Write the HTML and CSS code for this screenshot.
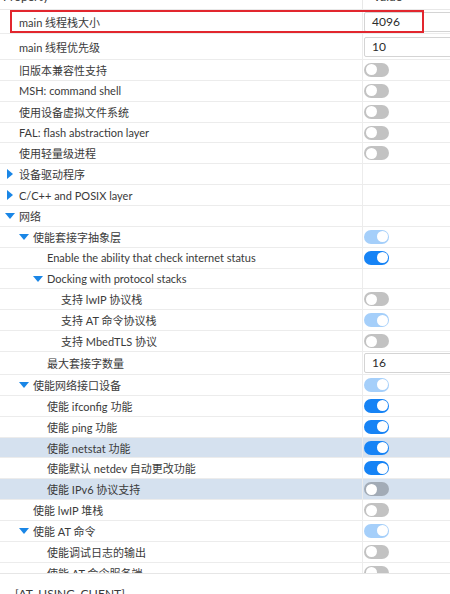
FILE: index.html
```html
<!DOCTYPE html>
<html>
<head>
<meta charset="utf-8">
<link rel="stylesheet" href="styles.css">
</head>
<body>
<div class="table">
  <div class="header">
    <div class="hcell hprop">Property</div>
    <div class="hcell hval">Value</div>
  </div>

  <div class="row row-a">
    <div class="label l0"><span class="slot"></span><span>main 线程栈大小</span></div>
    <div class="value"><div class="input">4096</div></div>
  </div>
  <div class="row row-b">
    <div class="label l0"><span class="slot"></span><span>main 线程优先级</span></div>
    <div class="value"><div class="input">10</div></div>
  </div>
  <div class="row">
    <div class="label l0"><span class="slot"></span><span>旧版本兼容性支持</span></div>
    <div class="value"><span class="toggle"></span></div>
  </div>
  <div class="row">
    <div class="label l0"><span class="slot"></span><span>MSH: command shell</span></div>
    <div class="value"><span class="toggle"></span></div>
  </div>
  <div class="row">
    <div class="label l0"><span class="slot"></span><span>使用设备虚拟文件系统</span></div>
    <div class="value"><span class="toggle"></span></div>
  </div>
  <div class="row">
    <div class="label l0"><span class="slot"></span><span>FAL: flash abstraction layer</span></div>
    <div class="value"><span class="toggle"></span></div>
  </div>
  <div class="row">
    <div class="label l0"><span class="slot"></span><span>使用轻量级进程</span></div>
    <div class="value"><span class="toggle"></span></div>
  </div>
  <div class="row">
    <div class="label l0"><span class="slot"><i class="arrow-right"></i></span><span>设备驱动程序</span></div>
    <div class="value"></div>
  </div>
  <div class="row">
    <div class="label l0"><span class="slot"><i class="arrow-right"></i></span><span>C/C++ and POSIX layer</span></div>
    <div class="value"></div>
  </div>
  <div class="row">
    <div class="label l0"><span class="slot"><i class="arrow-down"></i></span><span>网络</span></div>
    <div class="value"></div>
  </div>
  <div class="row">
    <div class="label l1"><span class="slot"><i class="arrow-down"></i></span><span>使能套接字抽象层</span></div>
    <div class="value"><span class="toggle on dim"></span></div>
  </div>
  <div class="row">
    <div class="label l2"><span class="slot"></span><span>Enable the ability that check internet status</span></div>
    <div class="value"><span class="toggle on"></span></div>
  </div>
  <div class="row">
    <div class="label l2"><span class="slot"><i class="arrow-down"></i></span><span>Docking with protocol stacks</span></div>
    <div class="value"></div>
  </div>
  <div class="row">
    <div class="label l3"><span class="slot"></span><span>支持 lwIP 协议栈</span></div>
    <div class="value"><span class="toggle"></span></div>
  </div>
  <div class="row">
    <div class="label l3"><span class="slot"></span><span>支持 AT 命令协议栈</span></div>
    <div class="value"><span class="toggle on dim"></span></div>
  </div>
  <div class="row">
    <div class="label l3"><span class="slot"></span><span>支持 MbedTLS 协议</span></div>
    <div class="value"><span class="toggle"></span></div>
  </div>
  <div class="row row-c">
    <div class="label l2"><span class="slot"></span><span>最大套接字数量</span></div>
    <div class="value"><div class="input">16</div></div>
  </div>
  <div class="row">
    <div class="label l1"><span class="slot"><i class="arrow-down"></i></span><span>使能网络接口设备</span></div>
    <div class="value"><span class="toggle on dim"></span></div>
  </div>
  <div class="row">
    <div class="label l2"><span class="slot"></span><span>使能 ifconfig 功能</span></div>
    <div class="value"><span class="toggle on"></span></div>
  </div>
  <div class="row">
    <div class="label l2"><span class="slot"></span><span>使能 ping 功能</span></div>
    <div class="value"><span class="toggle on"></span></div>
  </div>
  <div class="row selected">
    <div class="label l2"><span class="slot"></span><span>使能 netstat 功能</span></div>
    <div class="value"><span class="toggle on"></span></div>
  </div>
  <div class="row">
    <div class="label l2"><span class="slot"></span><span>使能默认 netdev 自动更改功能</span></div>
    <div class="value"><span class="toggle on"></span></div>
  </div>
  <div class="row selected">
    <div class="label l2"><span class="slot"></span><span>使能 IPv6 协议支持</span></div>
    <div class="value"><span class="toggle"></span></div>
  </div>
  <div class="row">
    <div class="label l1"><span class="slot"></span><span>使能 lwIP 堆栈</span></div>
    <div class="value"><span class="toggle"></span></div>
  </div>
  <div class="row">
    <div class="label l1"><span class="slot"><i class="arrow-down"></i></span><span>使能 AT 命令</span></div>
    <div class="value"><span class="toggle on dim"></span></div>
  </div>
  <div class="row">
    <div class="label l2"><span class="slot"></span><span>使能调试日志的输出</span></div>
    <div class="value"><span class="toggle"></span></div>
  </div>
  <div class="row">
    <div class="label l2"><span class="slot"></span><span>使能 AT 命令服务端</span></div>
    <div class="value"><span class="toggle"></span></div>
  </div>

  <div class="mark"></div>
</div>
<div class="footer">[AT_USING_CLIENT]</div>
</body>
</html>
```

FILE: styles.css
```css
html, body {
  margin: 0;
  padding: 0;
  background: #ffffff;
}
body {
  font-family: Lato, "Noto Sans CJK SC", sans-serif;
  font-size: 11px;
  color: #3a3a3a;
  overflow: hidden;
  height: 594px;
}
.table {
  position: relative;
  height: 573px;
  overflow: hidden;
  border-bottom: 1px solid #e6e6e6;
}
.header {
  display: grid;
  grid-template-columns: 363px 1fr;
  height: 10px;
  box-sizing: border-box;
  border-bottom: 1px solid #e8e8e8;
  overflow: hidden;
}
.hcell {
  font-size: 12px;
  line-height: 16px;
  margin-top: -11px;
}
.hprop {
  padding-left: 3px;
  border-right: 1px solid #e8e8e8;
}
.hval {
  padding-left: 10px;
}
.row {
  display: grid;
  grid-template-columns: 363px 1fr;
  height: 20.86px;
  box-sizing: border-box;
  border-bottom: 1px solid #ececec;
}
.row-a { height: 24px; }
.row-b { height: 26px; }
.row-c { height: 23px; }
.row.selected {
  background: #d5e1ef;
}
.label {
  display: flex;
  align-items: center;
  box-sizing: border-box;
  border-right: 1px solid #ececec;
  white-space: nowrap;
  overflow: hidden;
}
.l0 { padding-left: 5px; }
.l1 { padding-left: 19px; }
.l2 { padding-left: 33px; }
.l3 { padding-left: 47px; }
.slot {
  flex: none;
  width: 14px;
  display: flex;
  align-items: center;
}
.arrow-right {
  display: block;
  width: 0;
  height: 0;
  margin-left: 2px;
  border-left: 6px solid #1a86e6;
  border-top: 5px solid transparent;
  border-bottom: 5px solid transparent;
}
.arrow-down {
  display: block;
  width: 0;
  height: 0;
  border-top: 6px solid #1a86e6;
  border-left: 5px solid transparent;
  border-right: 5px solid transparent;
}
.value {
  display: flex;
  align-items: center;
  padding-left: 1px;
  overflow: hidden;
}
.input {
  flex: none;
  width: 140px;
  height: 20px;
  box-sizing: border-box;
  border: 1px solid #d4d4d4;
  border-radius: 2px;
  background: #ffffff;
  font-size: 12px;
  line-height: 18px;
  padding-left: 7px;
  color: #2c2c2c;
}
.toggle {
  position: relative;
  display: block;
  width: 25px;
  height: 14px;
  border-radius: 7px;
  background: rgba(0, 0, 0, 0.24);
}
.toggle::after {
  content: "";
  position: absolute;
  top: 1.5px;
  left: 1.5px;
  width: 11px;
  height: 11px;
  border-radius: 50%;
  background: #ffffff;
}
.toggle.on {
  background: #1683f5;
}
.toggle.on::after {
  left: 12.5px;
}
.toggle.on.dim {
  background: #a5cffa;
}
.mark {
  position: absolute;
  left: 10px;
  top: 10px;
  width: 414px;
  height: 23px;
  box-sizing: border-box;
  border: 2px solid #e2262e;
}
.footer {
  padding: 12px 0 0 15px;
  font-size: 12px;
  line-height: 16px;
  color: #3a3a3a;
}
```
